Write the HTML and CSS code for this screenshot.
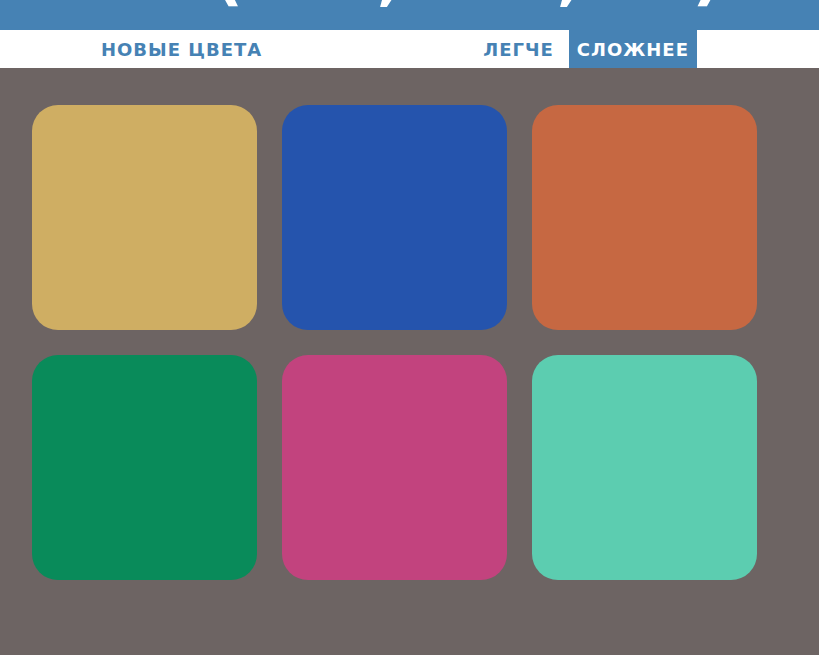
FILE: index.html
```html
<!DOCTYPE html>
<html lang="ru">
<head>
<meta charset="utf-8">
<title>Угадай цвет</title>
<link rel="stylesheet" href="styles.css">
</head>
<body>
<header class="title">
  <h1 class="heading">Угадай цвет<br><span class="rgb">RGB(207, 174, 99)</span></h1>
</header>
<nav class="stripe">
  <button class="btn btn-reset">Новые цвета</button>
  <span class="message"></span>
  <button class="btn">Легче</button>
  <button class="btn btn-active">Сложнее</button>
</nav>
<main class="board">
  <div class="square sq-yellow"></div>
  <div class="square sq-blue"></div>
  <div class="square sq-orange"></div>
  <div class="square sq-green"></div>
  <div class="square sq-pink"></div>
  <div class="square sq-teal"></div>
</main>
</body>
</html>
```
FILE: styles.css
```css
html, body {
  margin: 0;
  padding: 0;
}
body {
  background: #6d6463;
  font-family: "DejaVu Sans", Verdana, sans-serif;
  height: 655px;
  overflow: hidden;
}
.title {
  height: 30px;
  overflow: hidden;
  background: #4682b4;
  display: flex;
  flex-direction: column;
  justify-content: flex-end;
}
.heading {
  margin: 0;
  padding: 0 34px 22px 0;
  color: #fff;
  text-align: center;
  font-weight: 700;
  font-size: 64px;
  line-height: 64px;
  text-transform: uppercase;
  white-space: nowrap;
}
.rgb {
  font-size: 64px;
}
.stripe {
  height: 38px;
  background: #fff;
  display: flex;
  align-items: stretch;
  padding-left: 93px;
}
.btn {
  border: none;
  background: none;
  margin: 0;
  padding: 0 8px;
  color: #4682b4;
  font-family: "DejaVu Sans", Verdana, sans-serif;
  font-weight: 700;
  font-size: 18px;
  letter-spacing: 1px;
  text-transform: uppercase;
  cursor: pointer;
}
.btn + .btn {
  margin-left: 7px;
}
.btn-active {
  background: #4682b4;
  color: #fff;
}
.message {
  width: 205px;
}
.board {
  display: grid;
  grid-template-columns: repeat(3, 225px);
  grid-auto-rows: 225px;
  gap: 25px;
  padding: 37px 0 0 32px;
}
.square {
  border-radius: 26px;
}
.sq-yellow { background: #cfae63; }
.sq-blue { background: #2554ad; }
.sq-orange { background: #c66842; }
.sq-green { background: #098b5a; }
.sq-pink { background: #c2437e; }
.sq-teal { background: #5ccdb0; }
```
